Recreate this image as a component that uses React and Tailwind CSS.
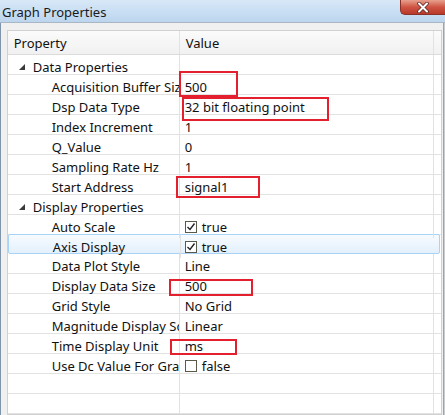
import React from 'react';

const font = { fontFamily: '"Noto Sans", "Open Sans", sans-serif' };

const rows = [
  { type: 'cat', label: 'Data Properties' },
  { label: 'Acquisition Buffer Size', value: '500' },
  { label: 'Dsp Data Type', value: '32 bit floating point' },
  { label: 'Index Increment', value: '1' },
  { label: 'Q_Value', value: '0' },
  { label: 'Sampling Rate Hz', value: '1' },
  { label: 'Start Address', value: 'signal1' },
  { type: 'cat', label: 'Display Properties' },
  { label: 'Auto Scale', value: 'true', check: true },
  { label: 'Axis Display', value: 'true', check: true, selected: true },
  { label: 'Data Plot Style', value: 'Line' },
  { label: 'Display Data Size', value: '500' },
  { label: 'Grid Style', value: 'No Grid' },
  { label: 'Magnitude Display Scale', value: 'Linear' },
  { label: 'Time Display Unit', value: 'ms' },
  { label: 'Use Dc Value For Graph', value: 'false', check: false },
  { type: 'empty' },
  { type: 'empty' },
];

// red annotation boxes drawn over the grid
const marks = [
  'left-[179px] top-[71px] w-[59px] h-[26px]',
  'left-[182px] top-[97px] w-[147px] h-[24px]',
  'left-[176px] top-[176px] w-[84px] h-[22px]',
  'left-[169px] top-[279px] w-[84px] h-[17px]',
  'left-[170px] top-[339px] w-[67px] h-[16px]',
];

const Checkbox = ({ checked }) => (
  <span className="w-[12px] h-[12px] border border-[#5a5a4a] bg-white flex items-center justify-center mr-[5px] -mt-[2px]">
    {checked && (
      <svg width="10" height="10" viewBox="0 0 10 10">
        <path d="M1.5 5 L4 7.5 L8.5 1.5" fill="none" stroke="#222" strokeWidth="1.4" />
      </svg>
    )}
  </span>
);

const Row = ({ row }) => {
  if (row.type === 'empty') {
    return (
      <div className="grid grid-cols-[172px_254px_1fr] h-[20px] border-b border-[#e2e2e2]">
        <div className="border-r border-[#e2e2e2]" />
        <div className="border-r border-[#e2e2e2]" />
        <div />
      </div>
    );
  }
  if (row.type === 'cat') {
    return (
      <div className="grid grid-cols-[172px_254px_1fr] h-[20px] border-b border-[#e2e2e2] text-[13px] text-[#111]">
        <div className="border-r border-[#e2e2e2] flex items-center pl-[11px] pt-[3px]">
          <svg width="6" height="6" viewBox="0 0 6 6" className="mr-[8px] -mt-[1px]">
            <polygon points="6,0 6,6 0,6" fill="#3a3a3a" />
          </svg>
          <span>{row.label}</span>
        </div>
        <div className="border-r border-[#e2e2e2]" />
        <div />
      </div>
    );
  }
  return (
    <div
      className={
        row.selected
          ? 'grid grid-cols-[172px_258px_1fr] h-[20px] border border-[#a8d2f6] rounded-[2px] bg-gradient-to-b from-[#f7fbff] to-[#e3f0fc] text-[13px] text-[#111] -mt-[1px] mr-[1px]'
          : 'grid grid-cols-[172px_254px_1fr] h-[20px] border-b border-[#e2e2e2] text-[13px] text-[#111]'
      }
    >
      <div className="border-r border-[#e2e2e2] flex items-center pl-[44px] pt-[3px] overflow-hidden whitespace-nowrap">
        {row.label}
      </div>
      <div className={row.selected ? 'flex items-center pl-[4px] pt-[3px]' : 'border-r border-[#e2e2e2] flex items-center pl-[5px] pt-[3px]'}>
        {row.check !== undefined && <Checkbox checked={row.check} />}
        {row.value}
      </div>
      <div />
    </div>
  );
};

export default function App() {
  return (
    <div className="w-[445px] h-[415px] relative overflow-hidden bg-[#eef2f7] flex flex-col" style={font}>
      {/* title bar */}
      <div className="h-[23px] bg-gradient-to-b from-[#d8e8f7] via-[#c9dff3] to-[#bcd5ee] flex items-start">
        <span className="text-[13px] text-[#1a1a1a] pl-[2px] pt-[2px] leading-[20px]">Graph Properties</span>
        <div className="ml-auto w-[45px] h-[15px] rounded-bl-[5px] border border-[#8a3228] border-t-0 border-r-0 bg-gradient-to-b from-[#e7a08f] via-[#cf5443] to-[#b8382a] flex items-center justify-center">
          <svg width="14" height="11" viewBox="0 0 14 11">
            <path d="M3 1.5 L11 9.5 M11 1.5 L3 9.5" stroke="#5a2a24" strokeWidth="3.6" strokeLinecap="round" />
            <path d="M3 1.5 L11 9.5 M11 1.5 L3 9.5" stroke="#ffffff" strokeWidth="2" strokeLinecap="round" />
          </svg>
        </div>
      </div>

      {/* client area */}
      <div className="flex-1 flex border-t border-[#a9b6c4] bg-[#f0f0f0]">
        <div className="w-[2px] bg-[#7f93aa]" />
        <div className="flex-1 pt-[7px] pl-[6px] pr-[1px]">
          <div className="border border-[#d0d0d0] bg-white h-full">
            {/* header */}
            <div className="grid grid-cols-[172px_254px_1fr] h-[24px] border-b border-[#dcdcdc] bg-gradient-to-b from-[#fbfbfb] to-[#f1f1f1] text-[13px] text-[#111]">
              <div className="border-r border-[#e2e2e2] flex items-center pl-[6px] pt-[3px]">Property</div>
              <div className="border-r border-[#e2e2e2] flex items-center pl-[6px] pt-[3px]">Value</div>
              <div />
            </div>
            {rows.map((r, i) => (
              <Row key={i} row={r} />
            ))}
          </div>
        </div>
        <div className="w-[5px] bg-[#c9ccd1] border-l border-[#9ea3aa]" />
      </div>

      {marks.map((m, i) => (
        <div key={i} className={`absolute border-2 border-[#e5202e] ${m}`} />
      ))}
    </div>
  );
}
